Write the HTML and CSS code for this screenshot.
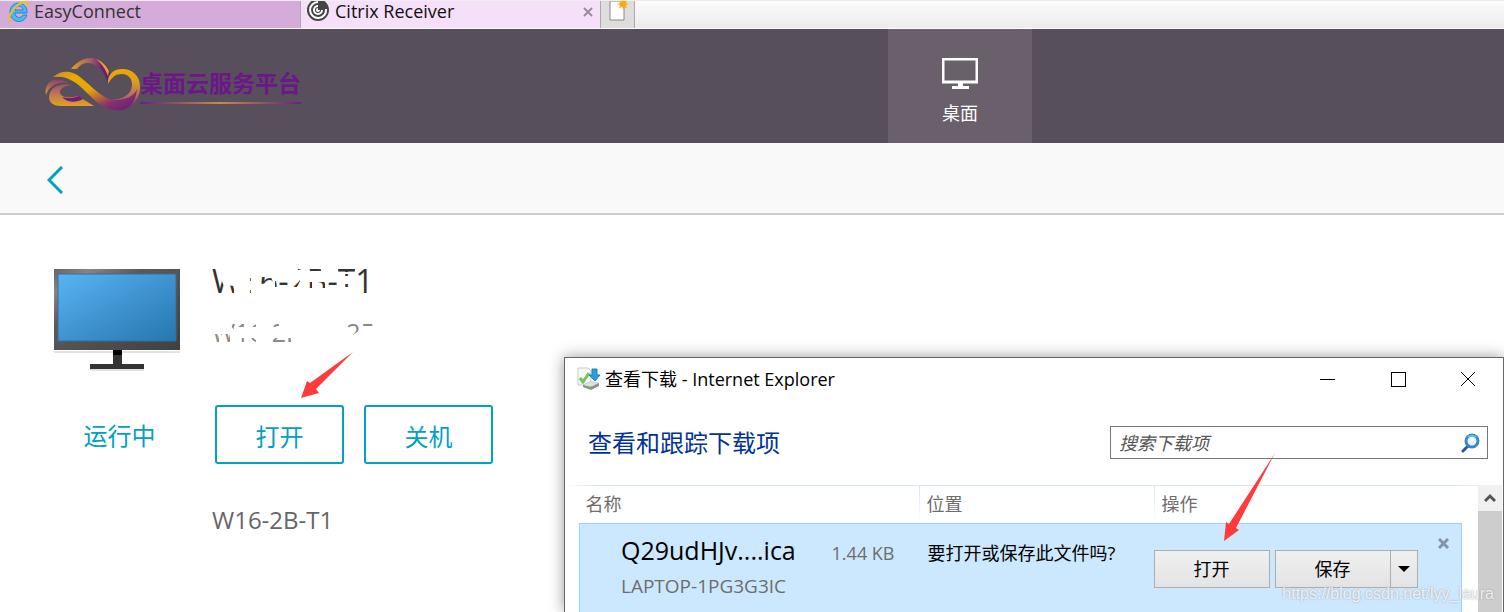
FILE: index.html
```html
<!DOCTYPE html>
<html lang="zh-CN">
<head>
    <meta charset="UTF-8">
    <meta name="viewport" content="width=device-width, initial-scale=1.0">
    <title>Citrix Receiver</title>
    <link rel="stylesheet" href="styles.css">
</head>
<body>
<!-- Browser tabs -->
<nav class="tabs">
    <a class="tab" href="#">
        <svg width="24" height="24" viewBox="0 0 24 24">
            <path d="M21 12H9c0 5 6 6 8 2h4C18 24 4 22 4 11 4-1 22-1 21 12zM9 9h8c0-5-8-5-8 0z" fill="#4bb8ee" stroke="#2386c6"/>
            <path d="M5 20C-1 20 7 5 17 1c5-2 5 1 4 4" fill="none" stroke="#f0bd2c" stroke-width="2"/>
        </svg>
        EasyConnect
    </a>
    <a class="tab tab-active" href="#">
        <svg width="24" height="24" viewBox="0 0 24 24">
            <circle cx="11" cy="9" r="11" fill="#454545"/>
            <path d="M19 8a8 8 0 1 1-8-7M15 9a4 4 0 1 1-4-4M11 8a1 1 0 1 0 1 1" fill="none" stroke="#fff" stroke-width="2"/>
        </svg>
        <span class="tab-label">Citrix Receiver</span>
        <svg width="12" height="12" viewBox="0 0 12 12"><path d="M2 2l8 8M10 2l-8 8" stroke="#9a8a9b" stroke-width="2"/></svg>
    </a>
    <button class="new-tab" aria-label="新建选项卡">
        <svg width="24" height="24" viewBox="0 0 24 24">
            <path d="M5 0h14v19H5z" fill="#fff" stroke="#8a8a8a"/>
            <path d="M18-2l1 3 3-2-1 3 3 1-3 1 1 3-3-1-1 2-1-2-3 1 1-3-3-1 3-1-1-3 3 2z" fill="#ffa914"/>
        </svg>
    </button>
</nav>

<!-- Header with the logo and the desktop entry -->
<header class="header">
    <div class="brand">
        <svg width="96" height="56" viewBox="0 0 96 56">
            <defs>
                <linearGradient id="band" x1="0" y1="0" x2="1" y2="1">
                    <stop offset="0" stop-color="#c98a3a"/>
                    <stop offset=".2" stop-color="#eaaa00"/>
                    <stop offset=".45" stop-color="#e6a508"/>
                    <stop offset=".75" stop-color="#86306f"/>
                    <stop offset="1" stop-color="#65187f"/>
                </linearGradient>
                <linearGradient id="arc" x1="0" y1="0" x2="1" y2="0">
                    <stop offset="0" stop-color="#e0a020"/>
                    <stop offset=".5" stop-color="#a85f62"/>
                    <stop offset=".8" stop-color="#701d7c"/>
                    <stop offset="1" stop-color="#65187f"/>
                </linearGradient>
                <linearGradient id="lobe" x1="0" y1="0" x2="0" y2="1">
                    <stop offset="0" stop-color="#eaaa00"/>
                    <stop offset=".3" stop-color="#dda01c"/>
                    <stop offset=".65" stop-color="#b3705c"/>
                    <stop offset="1" stop-color="#65187f"/>
                </linearGradient>
                <linearGradient id="edge" x1="0" y1="0" x2="0" y2="1">
                    <stop offset="0" stop-color="#8a3b70"/>
                    <stop offset="1" stop-color="#e0a020"/>
                </linearGradient>
                <linearGradient id="tail" x1="0" y1="0" x2="0" y2="1">
                    <stop offset="0" stop-color="#9c5068"/>
                    <stop offset=".5" stop-color="#c07c50"/>
                    <stop offset="1" stop-color="#e2a21a"/>
                </linearGradient>
            </defs>
            <path d="M27 12C33 4 41 1 48 1c11 1 18 9 18 17l-2 9C61 13 51 5 43 6c-4 0-7 2-10 6z" fill="url(#arc)"/>
            <path d="M52 2c6 2 11 7 13 12l-1 5C61 11 57 6 52 2z" fill="#e3a312"/>
            <path d="M64 27c-1-9 5-15 14-15 11 0 18 7 18 18 0 12-9 23-20 23l-12-10c15 0 24-6 24-15 0-7-4-11-10-11-8 0-11 5-14 10z" fill="url(#lobe)"/>
            <path d="M9 20c9-8 20-6 27 0 14 11 24 24 37 23 9 0 17-4 20-11-1 15-11 23-22 21C46 51 38 16 9 20z" fill="url(#band)"/>
            <path d="M2 38C-1 25 12 17 24 26 13 24 5 29 2 38z" fill="url(#edge)"/>
            <path d="M5 40c0-9 11-15 24-12-8 0-14 4-13 8 2 5 10 5 18 3l16 10H17C10 49 5 46 5 40z" fill="url(#tail)"/>
            <path d="M18 40c6 2 12 1 17-1l4 3c-7 4-15 4-21-2z" fill="#701d7c"/>
        </svg>
        <span class="brand-name">桌面云服务平台</span>
    </div>
    <a class="desktop-link" href="#">
        <svg width="36" height="32" viewBox="0 0 36 32">
            <path d="M1 1h34v23H1z" fill="none" stroke="#fff" stroke-width="3"/>
            <path d="M16 25h5v3h6v3H10v-3h6z" fill="#fff"/>
        </svg>
        桌面
    </a>
</header>
<div class="back-bar">
    <button class="back" aria-label="返回">
        <svg width="18" height="28" viewBox="0 0 18 28"><path d="M15 1L2 14l13 13" fill="none" stroke="#02a1c1" stroke-width="3"/></svg>
    </button>
</div>

<!-- Desktop details -->
<main class="details">
    <div class="machine">
        <svg width="130" height="106" viewBox="0 0 130 106">
            <defs>
                <linearGradient id="screen" x1="0" y1="0" x2="1" y2="1">
                    <stop offset="0" stop-color="#5ab4f2"/>
                    <stop offset=".6" stop-color="#3a8dc9"/>
                    <stop offset="1" stop-color="#2677b0"/>
                </linearGradient>
                <linearGradient id="frame" x1="0" y1="0" x2="1" y2="1">
                    <stop offset="0" stop-color="#666"/>
                    <stop offset=".15" stop-color="#858585"/>
                    <stop offset=".35" stop-color="#5a5a5a"/>
                    <stop offset="1" stop-color="#404040"/>
                </linearGradient>
            </defs>
            <path d="M2 84h126v2H2zM38 102h54v2H38z" fill="#e2e2e2"/>
            <path d="M2 2h126v81H2z" fill="url(#frame)"/>
            <path d="M6 7h118v67H6z" fill="url(#screen)" stroke="#346f9c"/>
            <path d="M61 83h9v14h22v5H38v-5h23z" fill="#333"/>
            <path d="M61 83h9v5h-9z" fill="#000"/>
        </svg>
        <p class="status">运行中</p>
    </div>
    <div class="info">
        <!-- Names rubbed out with white, only scraps stay visible -->
        <div class="erased">
            <h1>W16-2B-T1</h1>
            <p>W16-2B-T1-25</p>
            <svg class="eraser" width="190" height="88" viewBox="0 0 190 88">
                <path fill="#fff" fill-rule="evenodd" d="M0 0h190v88H0z
                    M8 8h8l8 18v9h-9l-3-12zM26 25l8 1v8h-6z
                    M48 18h3v3h-3zM48 30h3v4h-3zM58 25l1-8h12l3 8-8-2z
                    M75 21h13v6H75zM92 27l8-9v3l-3 6zM98 8h3v2h-3z
                    M106 7h15v4h-15zM106 22h6v6h-6zM118 22h7v6h-7zM126 21h11v6h-11z
                    M138 7h17v5h-17zM145 14h5v2h-5zM145 24h5v3h-5zM156 7h15v28h-15z
                    M11 74h8v8h-8zM21 74h9v8h-9zM28 62h28v5H34v3z
                    M36 78h20v4H36zM66 62h13v5H66zM67 78h24v4H67z
                    M107 78h6v4h-6zM120 78h6v4h-6zM140 62h2v4h-2z
                    M148 62h12v8l-7 5h-5zM163 62h14v4h-14zM169 68l8 2v6z"/>
            </svg>
        </div>
        <div class="actions">
            <button class="action">打开</button>
            <button class="action">关机</button>
        </div>
        <p class="machine-name">W16-2B-T1</p>
    </div>
</main>

<!-- Downloads window -->
<section class="window">
    <div class="title-bar">
        <svg width="24" height="24" viewBox="0 0 24 24">
            <path d="M1 1h10l3 3v14H1z" fill="#f7f7f7" stroke="#c9c9c9"/>
            <path d="M6 18l8-4 8 2v3l-8 4-8-3z" fill="#8d8d8d"/>
            <path d="M6 18l8-4 8 2-8 4z" fill="#dedede"/>
            <path d="M13 20l2 1" stroke="#4ecb3b" stroke-width="2"/>
            <path d="M3 11l3 4 6-9" fill="none" stroke="#6cc956" stroke-width="3"/>
            <path d="M15 2h5v6h3l-5 6-6-6h3z" fill="#2d9be0" stroke="#1f83c4"/>
        </svg>
        <h2>查看下载 - Internet Explorer</h2>
        <button aria-label="最小化"><svg width="16" height="16" viewBox="0 0 16 16"><path d="M0 8h15v1H0z"/></svg></button>
        <button aria-label="最大化"><svg width="16" height="16" viewBox="0 0 16 16"><path d="M1 1h14v14H1z" fill="none" stroke="#000" shape-rendering="crispEdges"/></svg></button>
        <button aria-label="关闭"><svg width="16" height="16" viewBox="0 0 16 16"><path d="M1 1l14 14M15 1L1 15" stroke="#000"/></svg></button>
    </div>
    <div class="toolbar">
        <h3>查看和跟踪下载项</h3>
        <label class="search">
            <input type="text" placeholder="搜索下载项" aria-label="搜索下载项">
            <svg width="20" height="20" viewBox="0 0 20 20">
                <path d="M3 18l5-5" stroke="#30549f" stroke-width="3" stroke-linecap="round"/>
                <circle cx="12" cy="8" r="6" fill="#eaf6ff" stroke="#3a86cc" stroke-width="3"/>
                <path d="M8 4q4-3 8 0" fill="none" stroke="#4cc4e5" stroke-width="2"/>
            </svg>
        </label>
    </div>
    <div class="list">
        <table class="downloads">
            <thead>
            <tr><th class="col-name">名称</th><th class="col-place">位置</th><th>操作</th></tr>
            </thead>
            <tbody>
            <tr>
                <td>
                    <div class="file"><span class="file-name">Q29udHJv....ica</span><span class="file-size">1.44 KB</span></div>
                    <div class="host">LAPTOP-1PG3G3IC</div>
                </td>
                <td class="question">要打开或保存此文件吗?</td>
                <td>
                    <div class="choices">
                        <button class="choice">打开</button>
                        <div class="split">
                            <button class="choice">保存</button>
                            <button class="choice choice-more" aria-label="更多"><svg width="12" height="6" viewBox="0 0 12 6"><path d="M0 0h12L6 6z"/></svg></button>
                        </div>
                        <button class="dismiss" aria-label="移除"><svg width="12" height="12" viewBox="0 0 12 12"><path d="M1 1l9 9M10 1l-9 9" stroke="#8296a8" stroke-width="3"/></svg></button>
                    </div>
                </td>
            </tr>
            </tbody>
        </table>
        <div class="scrollbar">
            <button aria-label="向上滚动"><svg width="12" height="10" viewBox="0 0 12 10"><path d="M1 8l5-5 5 5" fill="none" stroke="#555" stroke-width="3"/></svg></button>
        </div>
    </div>
</section>

<!-- Red arrows over the buttons -->
<svg class="arrow arrow-page" width="54" height="48" viewBox="0 0 54 48"><path d="M53 0L10 31l-3-2L1 46l18-5-3-4z" fill="#ff3b3b"/></svg>
<svg class="arrow arrow-window" width="54" height="92" viewBox="0 0 54 92"><path d="M52 2L6 73l-3-2L1 90l15-11-3-2z" fill="#ff3b3b"/></svg>
<span class="watermark">https://blog.csdn.net/lyy_laura</span>
</body>
</html>
```
FILE: styles.css
```css
* {
    box-sizing: border-box;
    margin: 0;
    padding: 0;
}

body {
    position: relative;
    height: 100vh;
    overflow: hidden;
    background: #fff;
    font-family: "Open Sans", "Noto Sans CJK SC", sans-serif;
    font-size: 18px;
    line-height: 24px;
}

button, input {
    font: inherit;
}

button {
    border: none;
    background: none;
}

svg {
    display: block;
    flex: none;
}

a {
    color: inherit;
    text-decoration: none;
}

.tabs {
    display: flex;
    height: 29px;
    border-top: 1px solid #eee;
    border-bottom: 1px solid #fff;
    background: linear-gradient(#fbfbfb, #ececec);
}

.tab {
    display: flex;
    gap: 4px;
    width: 301px;
    padding: 0 6px;
    border-right: 1px solid #aaa;
    background: #d5acd9;
    color: #333;
    line-height: 21px;
}

.tab-active {
    width: 300px;
    background: #f6dff8;
    color: #111;
}

.tab-active svg:last-child {
    margin-top: 5px;
}

.tab-label {
    flex: 1;
}

.new-tab {
    display: flex;
    width: 34px;
    padding-left: 4px;
    border-right: 1px solid #aaa;
    background: #ddd;
}

.header {
    display: flex;
    justify-content: space-between;
    height: 114px;
    padding: 0 472px 0 44px;
    background: #574f5b;
}

.brand {
    display: flex;
    padding-top: 28px;
}

.brand-name {
    height: 47px;
    padding-top: 14px;
    border-bottom: 2px solid;
    border-image: linear-gradient(to right, #6c1c86, #cc8a40, #6c1c86) 1;
    color: #6c1689;
    font-size: 23px;
    font-weight: 700;
}

.desktop-link {
    display: flex;
    flex-direction: column;
    align-items: center;
    gap: 11px;
    width: 144px;
    padding-top: 29px;
    background: #69606b;
    color: #fff;
}

.back-bar {
    height: 72px;
    padding: 23px 47px;
    border-bottom: 2px solid #ccc;
    background: #f9f9f9;
}

.details {
    display: flex;
    gap: 30px;
    padding: 52px;
}

.machine {
    width: 130px;
}

.status {
    margin-top: 49px;
    padding-left: 5px;
    color: #02a1c1;
    font-size: 24px;
    line-height: 28px;
    text-align: center;
}

.erased {
    position: relative;
    height: 138px;
}

.erased h1 {
    color: #333;
    font-size: 32px;
    font-weight: 400;
    line-height: 28px;
}

.erased p {
    padding-top: 23px;
    color: #888;
    font-size: 25px;
    line-height: 28px;
}

.eraser {
    position: absolute;
    top: -7px;
    left: -12px;
}

.actions {
    display: flex;
    gap: 20px;
    padding-left: 3px;
}

.action {
    width: 129px;
    height: 59px;
    padding-top: 4px;
    border: 2px solid #02a1c1;
    border-radius: 3px;
    color: #02a1c1;
    font-size: 24px;
}

.machine-name {
    margin-top: 42px;
    color: #666;
    font-size: 24px;
    line-height: 28px;
}

.window {
    position: absolute;
    top: 357px;
    right: 0;
    bottom: 0;
    left: 564px;
    border: 1px solid #666;
    border-bottom: none;
    background: #fff;
    box-shadow: 0 0 14px rgba(0, 0, 0, 0.4);
}

.title-bar {
    display: flex;
    align-items: center;
    height: 42px;
    padding-left: 12px;
}

.title-bar h2 {
    flex: 1;
    padding-left: 4px;
    font-size: 18px;
    font-weight: 400;
}

.title-bar button {
    width: 70px;
    padding: 0 27px;
}

.toolbar {
    display: flex;
    justify-content: space-between;
    align-items: center;
    height: 85px;
    padding: 0 15px 0 23px;
}

.toolbar h3 {
    color: #039;
    font-size: 24px;
    font-weight: 400;
    line-height: 28px;
}

.search {
    display: flex;
    align-items: center;
    width: 378px;
    height: 33px;
    padding: 0 7px 0 8px;
    border: 1px solid #767676;
}

.search input {
    flex: 1;
    border: none;
    outline: none;
    font-style: italic;
}

.search input::placeholder {
    color: #555;
}

.list {
    display: flex;
    gap: 16px;
    height: 127px;
    padding: 0 1px 0 14px;
    background: linear-gradient(to right, #fff, #d6e5f5 30px, #d6e5f5 95%, #fff) top / 100% 1px no-repeat;
}

.downloads {
    flex: 1;
    height: 140px;
    border-collapse: collapse;
    table-layout: fixed;
}

.downloads th {
    height: 38px;
    padding-left: 8px;
    color: #6d6d6d;
    font-weight: 400;
    text-align: left;
}

.downloads th + th {
    background: linear-gradient(#d6e5f5, #fff) left / 1px 100% no-repeat;
}

.downloads .col-name {
    width: 339px;
    padding-left: 6px;
}

.col-place {
    width: 235px;
}

.downloads tbody {
    border: 1px solid #99d1ff;
    background: #cce8ff;
}

.downloads td {
    height: 102px;
    vertical-align: top;
}

.file {
    display: flex;
    align-items: baseline;
    justify-content: space-between;
    padding: 9px 24px 0 41px;
    line-height: 34px;
}

.file-name {
    font-size: 25px;
}

.file-size, .host {
    color: #6d6d6d;
}

.host {
    padding: 4px 0 0 41px;
    font-size: 19px;
}

.downloads .question {
    padding: 17px 0 0 9px;
    white-space: nowrap;
}

.choices {
    display: flex;
    padding-top: 26px;
}

.choice {
    width: 116px;
    height: 38px;
    border: 1px solid #adadad;
    background: linear-gradient(#f0f0f0, #e3e3e3);
}

.split {
    display: flex;
    margin: 0 20px 0 5px;
}

.choice-more {
    width: 28px;
    margin-left: -1px;
    padding-left: 7px;
}

.dismiss {
    height: 12px;
    margin-top: -12px;
}

.scrollbar {
    width: 24px;
    background: #cdcdcd;
}

.scrollbar button {
    width: 24px;
    height: 26px;
    padding: 0 6px;
    background: #f0f0f0;
}

.arrow {
    position: absolute;
}

.arrow-page {
    top: 352px;
    left: 300px;
}

.arrow-window {
    top: 451px;
    left: 1223px;
}

.watermark {
    position: absolute;
    right: 10px;
    bottom: 6px;
    color: rgba(255, 255, 255, 0.8);
    font-family: "Liberation Sans", sans-serif;
    font-size: 16px;
    text-shadow: 0 0 2px #999;
}
```
